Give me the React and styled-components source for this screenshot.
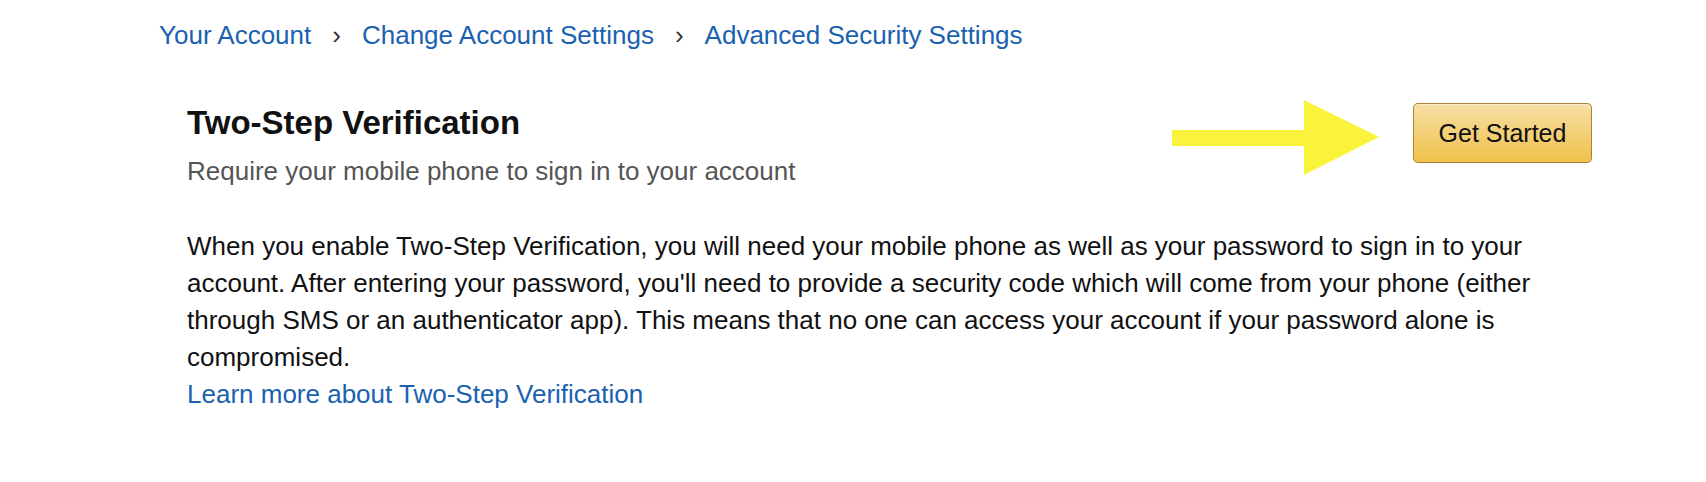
import React from "react";
import styled, { createGlobalStyle } from "styled-components";

const GlobalStyle = createGlobalStyle`
  body {
    margin: 0;
    background: #fff;
    font-family: "Liberation Sans", Arial, Helvetica, sans-serif;
    color: #111;
  }
`;

const App = () => {
  return (
    <>
      <GlobalStyle />
      <Page>
        <Breadcrumb>
          <Crumb href="#">Your Account</Crumb>
          <Separator>›</Separator>
          <Crumb href="#">Change Account Settings</Crumb>
          <Separator>›</Separator>
          <Crumb href="#">Advanced Security Settings</Crumb>
        </Breadcrumb>

        <Section>
          <HeaderRow>
            <div>
              <Title>Two-Step Verification</Title>
              <Subtitle>Require your mobile phone to sign in to your account</Subtitle>
            </div>
            <Actions>
              <Arrow width="207" height="75" viewBox="0 0 207 75">
                <rect x="0" y="30" width="134" height="16" fill="#faf33c" />
                <polygon points="132,0 207,37 132,75" fill="#faf33c" />
              </Arrow>
              <PrimaryButton>Get Started</PrimaryButton>
            </Actions>
          </HeaderRow>

          <Body>
            When you enable Two-Step Verification, you will need your mobile phone as well as your
            password to sign in to your account. After entering your password, you'll need to provide a
            security code which will come from your phone (either through SMS or an authenticator app).
            This means that no one can access your account if your password alone is compromised.
            <LearnMore href="#">Learn more about Two-Step Verification</LearnMore>
          </Body>
        </Section>
      </Page>
    </>
  );
};

// Styled Components
const Page = styled.div`
  padding-top: 16px;
`;

const Breadcrumb = styled.nav`
  display: flex;
  align-items: baseline;
  padding-left: 159px;
  font-size: 26px;
  line-height: 38px;
`;

const Crumb = styled.a`
  color: #1a62b0;
  text-decoration: none;
`;

const Separator = styled.span`
  color: #333;
  padding: 0 21px;
`;

const Section = styled.section`
  width: 1405px;
  margin-top: 49px;
  padding-left: 187px;
`;

const HeaderRow = styled.div`
  display: flex;
  justify-content: space-between;
  align-items: flex-start;
`;

const Title = styled.h1`
  margin: 0;
  font-size: 33px;
  line-height: 40px;
  font-weight: bold;
  color: #111;
`;

const Subtitle = styled.p`
  margin: 9px 0 0;
  font-size: 26px;
  line-height: 38px;
  color: #555;
`;

const Actions = styled.div`
  display: flex;
  align-items: flex-start;
  gap: 34px;
`;

const Arrow = styled.svg`
  display: block;
  margin-top: -3px;
`;

const PrimaryButton = styled.button`
  width: 179px;
  height: 60px;
  border: 1px solid #a88734;
  border-bottom-color: #9c7e31;
  border-radius: 5px;
  background: linear-gradient(to bottom, #f7dfa5, #f0c14b);
  box-shadow: inset 0 1px 0 rgba(255, 255, 255, 0.4);
  font-family: "Liberation Sans", Arial, Helvetica, sans-serif;
  font-size: 25px;
  color: #111;
  cursor: pointer;
  padding: 0;
`;

const Body = styled.p`
  margin: 38px 0 0;
  max-width: 1390px;
  font-size: 26px;
  line-height: 37px;
  color: #111;
`;

const LearnMore = styled.a`
  display: block;
  color: #1a62b0;
  text-decoration: none;
`;

export default App;
